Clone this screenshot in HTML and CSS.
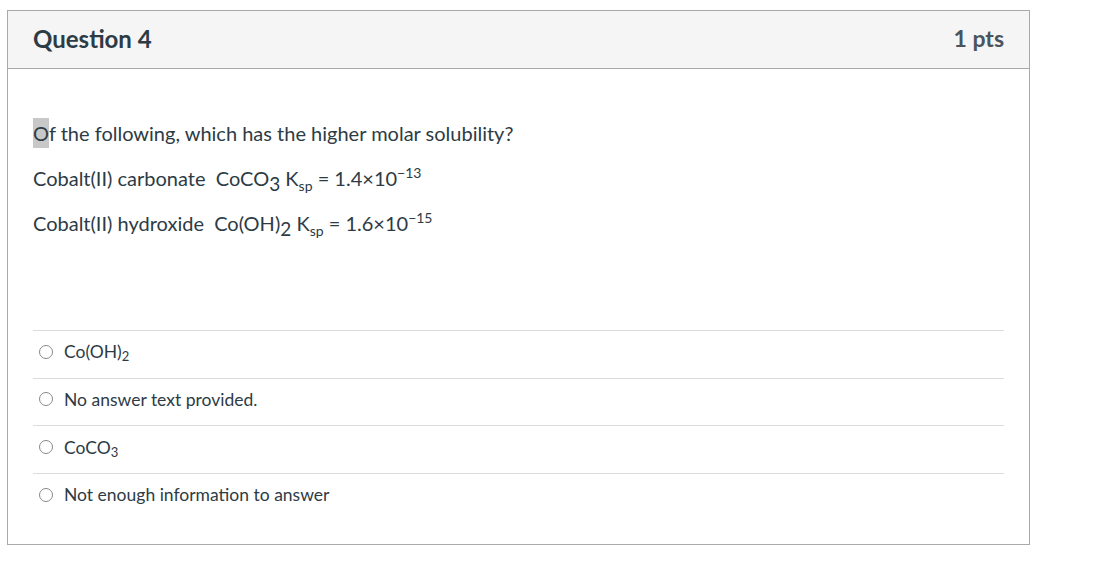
FILE: index.html
```html
<!DOCTYPE html>
<html>
<head>
<meta charset="utf-8">
<link rel="stylesheet" href="styles.css">
</head>
<body>
<div class="card">
  <div class="header">
    <span class="title">Question 4</span>
    <span class="pts">1 pts</span>
  </div>
  <div class="body">
    <p class="q"><span class="hl">O</span>f the following, which has the higher molar solubility?</p>
    <p class="q">Cobalt(II) carbonate&nbsp; CoCO<sub class="big">3</sub> K<sub class="small">sp</sub> = 1.4×10<sup>−13</sup></p>
    <p class="q">Cobalt(II) hydroxide&nbsp; Co(OH)<sub class="big">2</sub> K<sub class="small">sp</sub> = 1.6×10<sup>−15</sup></p>
    <div class="answers">
      <div class="ans"><span class="radio"></span><span>Co(OH)<sub class="asub">2</sub></span></div>
      <div class="ans"><span class="radio"></span><span>No answer text provided.</span></div>
      <div class="ans"><span class="radio"></span><span>CoCO<sub class="asub">3</sub></span></div>
      <div class="ans"><span class="radio"></span><span>Not enough information to answer</span></div>
    </div>
  </div>
</div>
</body>
</html>
```
FILE: styles.css
```css
body {
  margin: 0;
  background: #fff;
  font-family: Lato, "Open Sans", sans-serif;
  color: #2d3b45;
}
.card {
  margin: 10px 0 0 7px;
  border: 1px solid #a9a9a9;
  box-sizing: border-box;
  width: 1023px;
}
.header {
  background: #f5f5f5;
  border-bottom: 1px solid #a9a9a9;
  display: flex;
  align-items: center;
  justify-content: space-between;
  padding: 0 25px 3px 25px;
  box-sizing: border-box;
  height: 58px;
}
.title {
  font-weight: 700;
  font-size: 24px;
}
.pts {
  font-weight: 700;
  font-size: 23px;
  color: #4a545c;
}
.body {
  padding: 52px 25px 23px 25px;
}
.q {
  margin: 0 0 21px 0;
  font-size: 20px;
  line-height: 24px;
}
.hl {
  background: #c8c8c8;
  padding: 3px 0;
}
sub, sup { line-height: 0; }
sub.big { font-size: 19px; vertical-align: -5px; }
sub.small { font-size: 14px; vertical-align: -5px; }
sup { font-size: 14px; vertical-align: 8px; }
.answers {
  margin-top: 95px;
}
.ans {
  border-top: 1px solid #dcdcdc;
  display: flex;
  align-items: center;
  gap: 11px;
  padding-left: 6px;
  padding-bottom: 5px;
  box-sizing: content-box;
  height: 41.67px;
  font-size: 17.5px;
}
.radio {
  width: 12px;
  height: 12px;
  border: 1px solid #8a8a8a;
  border-radius: 50%;
  flex: none;
}
sub.asub { font-size: 13px; vertical-align: -3px; }
```
